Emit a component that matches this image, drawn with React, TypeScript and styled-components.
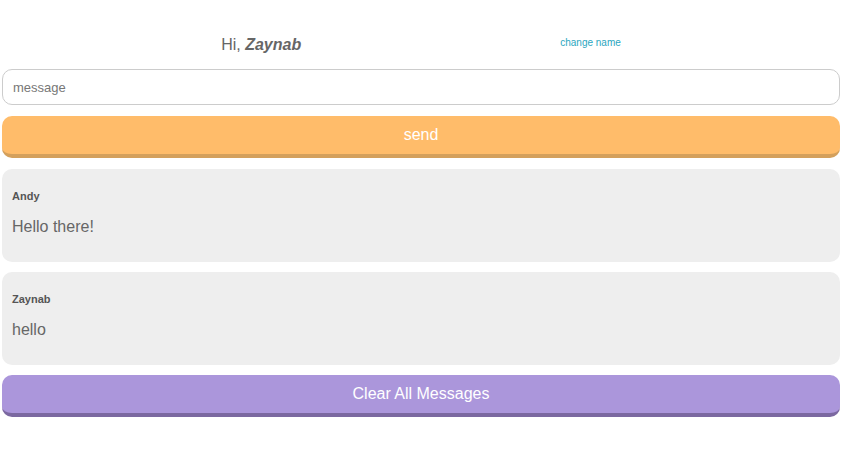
import React, { useState } from "react";
import styled, { createGlobalStyle } from "styled-components";

const GlobalStyle = createGlobalStyle`
  body {
    margin: 0;
    background: #fff;
    font-family: "Liberation Sans", Arial, sans-serif;
  }
`;

const Page = styled.div`
  width: 838px;
  margin: 0 0 0 2px;
  padding-top: 33px;
  display: flex;
  flex-direction: column;
`;

const Header = styled.div`
  display: flex;
  justify-content: center;
  align-items: center;
  gap: 259px;
  height: 22px;
  margin-bottom: 14px;
`;

const Greeting = styled.h2`
  margin: 2px 0 0;
  font-size: 16px;
  font-weight: 400;
  color: #666;
  b {
    font-style: italic;
    font-weight: 700;
  }
`;

const ChangeName = styled.a`
  font-size: 10px;
  color: #2ba6c0;
  cursor: pointer;
  margin-top: -4px;
`;

const MessageInput = styled.input`
  box-sizing: border-box;
  width: 100%;
  height: 36px;
  border: 1px solid #ccc;
  border-radius: 10px;
  padding: 0 10px;
  font-family: "Liberation Sans", Arial, sans-serif;
  font-size: 13px;
  color: #444;
  outline: none;
  margin-bottom: 11px;
  &::placeholder {
    color: #777;
  }
`;

const ActionButton = styled.button<{ $bg: string; $shade: string }>`
  box-sizing: border-box;
  width: 100%;
  height: 42px;
  border: none;
  border-bottom: 4px solid ${(p) => p.$shade};
  border-radius: 10px;
  background: ${(p) => p.$bg};
  color: #fff;
  font-family: "Liberation Sans", Arial, sans-serif;
  font-size: 16px;
  padding: 0;
  cursor: pointer;
  margin-bottom: 11px;
`;

const Card = styled.div`
  box-sizing: border-box;
  height: 93px;
  background: #eee;
  border-radius: 10px;
  padding: 21px 10px 0;
  margin-bottom: 10px;
`;

const Author = styled.div`
  font-size: 11px;
  font-weight: 700;
  color: #555;
  margin-bottom: 14px;
`;

const Body = styled.div`
  font-size: 16px;
  color: #666;
  padding-top: 2px;
`;

type Msg = { author: string; text: string };

export default function App() {
  const [messages, setMessages] = useState<Msg[]>([
    { author: "Andy", text: "Hello there!" },
    { author: "Zaynab", text: "hello" },
  ]);
  const [draft, setDraft] = useState("");

  const send = () => {
    if (!draft.trim()) return;
    setMessages([...messages, { author: "Zaynab", text: draft }]);
    setDraft("");
  };

  return (
    <>
      <GlobalStyle />
      <Page>
        <Header>
          <Greeting>
            Hi, <b>Zaynab</b>
          </Greeting>
          <ChangeName>change name</ChangeName>
        </Header>
        <MessageInput
          placeholder="message"
          value={draft}
          onChange={(e) => setDraft(e.target.value)}
        />
        <ActionButton $bg="#ffbc6a" $shade="#d4a05c" onClick={send}>
          send
        </ActionButton>
        {messages.map((m, i) => (
          <Card key={i}>
            <Author>{m.author}</Author>
            <Body>{m.text}</Body>
          </Card>
        ))}
        <ActionButton $bg="#ab96db" $shade="#7b68a0" onClick={() => setMessages([])}>
          Clear All Messages
        </ActionButton>
      </Page>
    </>
  );
}
